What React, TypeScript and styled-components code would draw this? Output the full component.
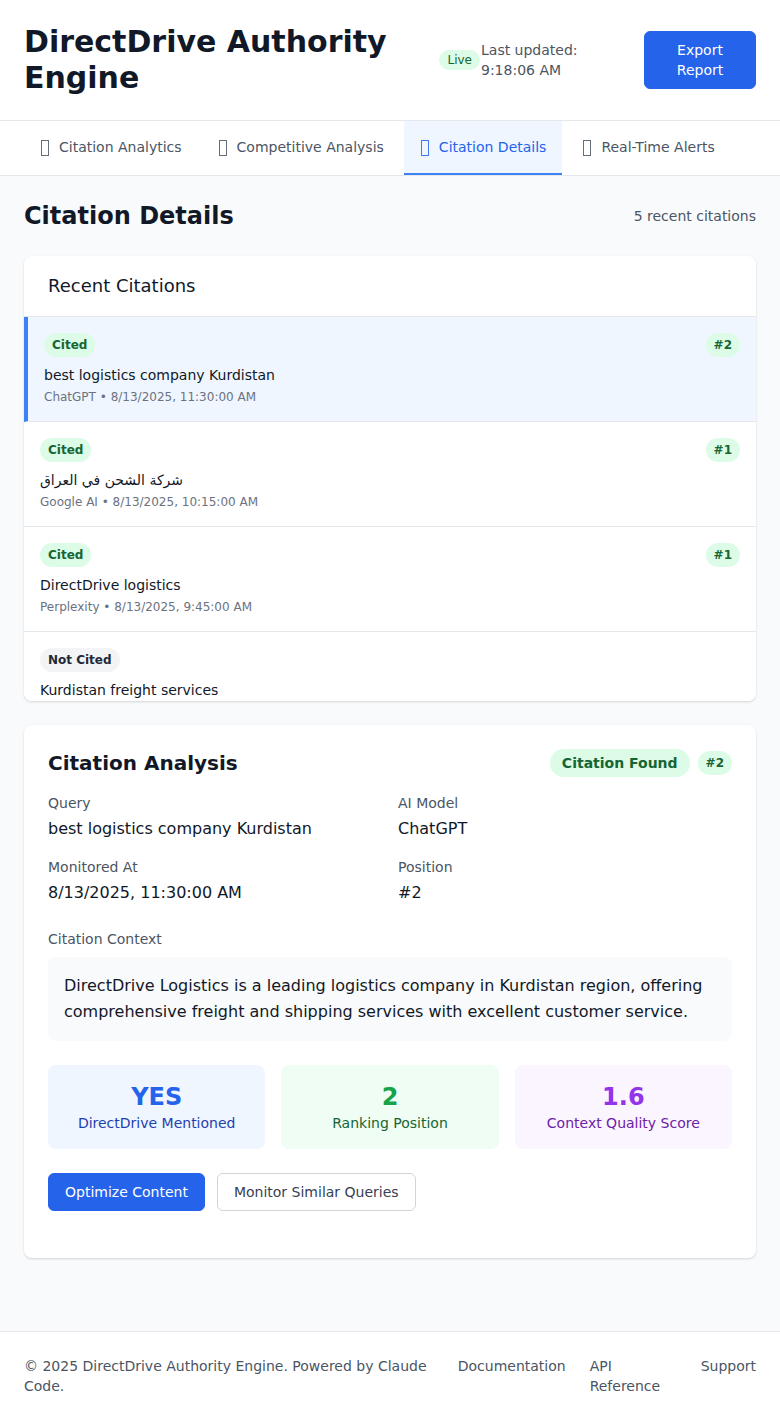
import React from 'react'
import styled, { createGlobalStyle } from 'styled-components'

const GlobalStyle = createGlobalStyle`
	* { box-sizing: border-box; }
	body {
		margin: 0;
		font-family: "DejaVu Sans", "Noto Sans", sans-serif;
		color: #111827;
		background: #f9fafb;
	}
	button { font-family: inherit; }
`

type Citation = {
	cited: boolean
	rank?: number
	query: string
	model: string
	at: string
}

const citations: Citation[] = [
	{ cited: true, rank: 2, query: 'best logistics company Kurdistan', model: 'ChatGPT', at: '8/13/2025, 11:30:00 AM' },
	{ cited: true, rank: 1, query: 'شركة الشحن في العراق', model: 'Google AI', at: '8/13/2025, 10:15:00 AM' },
	{ cited: true, rank: 1, query: 'DirectDrive logistics', model: 'Perplexity', at: '8/13/2025, 9:45:00 AM' },
	{ cited: false, query: 'Kurdistan freight services', model: 'Claude', at: '8/13/2025, 9:00:00 AM' },
	{ cited: false, query: 'Erbil shipping company', model: 'ChatGPT', at: '8/13/2025, 8:30:00 AM' },
]

const tabs = ['Citation Analytics', 'Competitive Analysis', 'Citation Details', 'Real-Time Alerts']

const App = () => {
	const selected = 0
	return (
		<Page>
			<GlobalStyle />
			<Header>
				<Title>DirectDrive Authority Engine</Title>
				<HeaderRight>
					<Status>
						<LiveBadge>Live</LiveBadge>
						<Updated>Last updated: 9:18:06 AM</Updated>
					</Status>
					<PrimaryButton $wide>Export Report</PrimaryButton>
				</HeaderRight>
			</Header>

			<Tabs>
				{tabs.map((label, i) => (
					<Tab key={label} $active={i === 2}>
						{/* emoji icons show as missing-glyph boxes in the original */}
						<TabIcon />
						{label}
					</Tab>
				))}
			</Tabs>

			<Main>
				<SectionHead>
					<PageTitle>Citation Details</PageTitle>
					<Muted>5 recent citations</Muted>
				</SectionHead>

				<Card>
					<CardHeader>Recent Citations</CardHeader>
					<List>
						{citations.map((c, i) => (
							<Item key={i} $selected={i === selected}>
								<ItemTop>
									<Pill $tone={c.cited ? 'green' : 'gray'}>{c.cited ? 'Cited' : 'Not Cited'}</Pill>
									{c.rank && <Pill $tone="green">#{c.rank}</Pill>}
								</ItemTop>
								<Query>{c.query}</Query>
								<Meta>
									{c.model} • {c.at}
								</Meta>
							</Item>
						))}
					</List>
				</Card>

				<AnalysisCard>
					<AnalysisHead>
						<AnalysisTitle>Citation Analysis</AnalysisTitle>
						<Badges>
							<FoundBadge>Citation Found</FoundBadge>
							<Pill $tone="green">#2</Pill>
						</Badges>
					</AnalysisHead>

					<Fields>
						<div>
							<Label>Query</Label>
							<Value>best logistics company Kurdistan</Value>
						</div>
						<div>
							<Label>AI Model</Label>
							<Value>ChatGPT</Value>
						</div>
						<div>
							<Label>Monitored At</Label>
							<Value>8/13/2025, 11:30:00 AM</Value>
						</div>
						<div>
							<Label>Position</Label>
							<Value>#2</Value>
						</div>
					</Fields>

					<Label>Citation Context</Label>
					<Context>
						DirectDrive Logistics is a leading logistics company in Kurdistan region, offering comprehensive
						freight and shipping services with excellent customer service.
					</Context>

					<Stats>
						<Stat $bg="#eff6ff">
							<StatValue $color="#2563eb">YES</StatValue>
							<StatLabel $color="#1e40af">DirectDrive Mentioned</StatLabel>
						</Stat>
						<Stat $bg="#f0fdf4">
							<StatValue $color="#16a34a">2</StatValue>
							<StatLabel $color="#166534">Ranking Position</StatLabel>
						</Stat>
						<Stat $bg="#faf5ff">
							<StatValue $color="#9333ea">1.6</StatValue>
							<StatLabel $color="#6b21a8">Context Quality Score</StatLabel>
						</Stat>
					</Stats>

					<Actions>
						<PrimaryButton>Optimize Content</PrimaryButton>
						<OutlineButton>Monitor Similar Queries</OutlineButton>
					</Actions>
				</AnalysisCard>
			</Main>

			<Footer>
				<Copyright>© 2025 DirectDrive Authority Engine. Powered by Claude Code.</Copyright>
				<FooterLinks>
					<FooterLink>Documentation</FooterLink>
					<FooterLink $width={87}>API Reference</FooterLink>
					<FooterLink>Support</FooterLink>
				</FooterLinks>
			</Footer>
		</Page>
	)
}

const Page = styled.div`
	min-height: 100vh;
	background: #f9fafb;
`

const Header = styled.header`
	display: flex;
	align-items: center;
	justify-content: space-between;
	height: 121px;
	padding: 0 24px;
	background: #fff;
	border-bottom: 1px solid #e5e7eb;
`

const Title = styled.h1`
	flex: 1;
	margin: 0 16px 0 0;
	font-size: 30px;
	line-height: 36px;
	font-weight: 700;
	color: #111827;
`

const HeaderRight = styled.div`
	display: flex;
	align-items: center;
	gap: 16px;
`

const Status = styled.div`
	display: flex;
	align-items: center;
	gap: 1px;
`

const LiveBadge = styled.span`
	padding: 2px 8px;
	border-radius: 9999px;
	background: #dcfce7;
	color: #166534;
	font-size: 12px;
	line-height: 16px;
`

const Updated = styled.span`
	width: 147px;
	font-size: 14px;
	line-height: 20px;
	color: #4b5563;
`

const PrimaryButton = styled.button<{ $wide?: boolean }>`
	width: ${p => (p.$wide ? '112px' : 'auto')};
	padding: 8px 16px;
	border: 1px solid #2563eb;
	border-radius: 6px;
	background: #2563eb;
	color: #fff;
	font-size: 14px;
	line-height: 20px;
	cursor: pointer;
`

const OutlineButton = styled.button`
	padding: 8px 16px;
	border: 1px solid #d1d5db;
	border-radius: 6px;
	background: #fff;
	color: #374151;
	font-size: 14px;
	line-height: 20px;
	cursor: pointer;
`

const Tabs = styled.nav`
	display: flex;
	gap: 4px;
	padding: 0 24px;
	background: #fff;
	border-bottom: 1px solid #e5e7eb;
`

const Tab = styled.div<{ $active?: boolean }>`
	display: flex;
	align-items: center;
	padding: 16px;
	font-size: 14px;
	line-height: 20px;
	color: ${p => (p.$active ? '#2563eb' : '#4b5563')};
	background: ${p => (p.$active ? '#eff6ff' : 'transparent')};
	border-bottom: 2px solid ${p => (p.$active ? '#3b82f6' : 'transparent')};
`

const TabIcon = styled.span`
	display: inline-block;
	width: 8px;
	height: 16px;
	margin: 1px 10px 0 1px;
	border: 1px solid currentColor;
	opacity: 0.85;
`

const Main = styled.main`
	padding: 24px;
`

const SectionHead = styled.div`
	display: flex;
	align-items: center;
	justify-content: space-between;
	margin-bottom: 24px;
`

const PageTitle = styled.h2`
	margin: 0;
	font-size: 24px;
	line-height: 32px;
	font-weight: 700;
`

const Muted = styled.span`
	font-size: 14px;
	line-height: 20px;
	color: #4b5563;
`

const Card = styled.section`
	background: #fff;
	border-radius: 8px;
	box-shadow: 0 1px 3px rgba(0, 0, 0, 0.1), 0 1px 2px rgba(0, 0, 0, 0.06);
	overflow: hidden;
`

const CardHeader = styled.h3`
	margin: 0;
	padding: 16px 24px;
	font-size: 18px;
	line-height: 28px;
	font-weight: 500;
	border-bottom: 1px solid #e5e7eb;
`

const List = styled.div`
	max-height: 384px;
	overflow: hidden;
`

const Item = styled.div<{ $selected?: boolean }>`
	padding: 16px;
	border-bottom: 1px solid #e5e7eb;
	background: ${p => (p.$selected ? '#eff6ff' : '#fff')};
	border-left: ${p => (p.$selected ? '4px solid #3b82f6' : 'none')};
`

const ItemTop = styled.div`
	display: flex;
	align-items: center;
	justify-content: space-between;
`

const Pill = styled.span<{ $tone: 'green' | 'gray' }>`
	padding: 4px 8px;
	border-radius: 9999px;
	font-size: 12px;
	line-height: 16px;
	font-weight: 700;
	background: ${p => (p.$tone === 'green' ? '#dcfce7' : '#f3f4f6')};
	color: ${p => (p.$tone === 'green' ? '#166534' : '#1f2937')};
`

const Query = styled.p`
	margin: 8px 0 0;
	font-size: 14px;
	line-height: 20px;
	color: #111827;
`

const Meta = styled.p`
	margin: 4px 0 0;
	font-size: 12px;
	line-height: 16px;
	color: #6b7280;
`

const AnalysisCard = styled(Card)`
	margin-top: 24px;
	padding: 24px 24px 47px;
`

const AnalysisHead = styled.div`
	display: flex;
	align-items: center;
	justify-content: space-between;
	margin-bottom: 16px;
`

const AnalysisTitle = styled.h3`
	margin: 0;
	font-size: 20px;
	line-height: 28px;
	font-weight: 700;
`

const Badges = styled.div`
	display: flex;
	align-items: center;
	gap: 8px;
`

const FoundBadge = styled.span`
	padding: 4px 12px;
	border-radius: 9999px;
	background: #dcfce7;
	color: #166534;
	font-size: 14px;
	line-height: 20px;
	font-weight: 700;
`

const Fields = styled.div`
	display: grid;
	grid-template-columns: 1fr 1fr;
	column-gap: 16px;
	row-gap: 16px;
	margin-bottom: 24px;
`

const Label = styled.div`
	font-size: 14px;
	line-height: 20px;
	color: #4b5563;
`

const Value = styled.div`
	margin-top: 4px;
	font-size: 16px;
	line-height: 24px;
	color: #111827;
`

const Context = styled.div`
	margin-top: 8px;
	padding: 16px;
	border-radius: 8px;
	background: #f9fafb;
	font-size: 16px;
	line-height: 26px;
	color: #111827;
`

const Stats = styled.div`
	display: grid;
	grid-template-columns: repeat(3, 1fr);
	gap: 16px;
	margin-top: 24px;
`

const Stat = styled.div<{ $bg: string }>`
	padding: 16px;
	border-radius: 8px;
	background: ${p => p.$bg};
	text-align: center;
`

const StatValue = styled.div<{ $color: string }>`
	font-size: 24px;
	line-height: 32px;
	font-weight: 700;
	color: ${p => p.$color};
`

const StatLabel = styled.div<{ $color: string }>`
	font-size: 14px;
	line-height: 20px;
	color: ${p => p.$color};
`

const Actions = styled.div`
	display: flex;
	gap: 12px;
	margin-top: 24px;
`

const Footer = styled.footer`
	display: flex;
	justify-content: space-between;
	align-items: flex-start;
	margin-top: 49px;
	padding: 24px;
	background: #fff;
	border-top: 1px solid #e5e7eb;
`

const Copyright = styled.p`
	flex: 1;
	margin: 0;
	font-size: 14px;
	line-height: 20px;
	color: #4b5563;
`

const FooterLinks = styled.div`
	display: flex;
	gap: 24px;
`

const FooterLink = styled.a<{ $width?: number }>`
	width: ${p => (p.$width ? `${p.$width}px` : 'auto')};
	font-size: 14px;
	line-height: 20px;
	color: #4b5563;
	text-decoration: none;
`

export default App
